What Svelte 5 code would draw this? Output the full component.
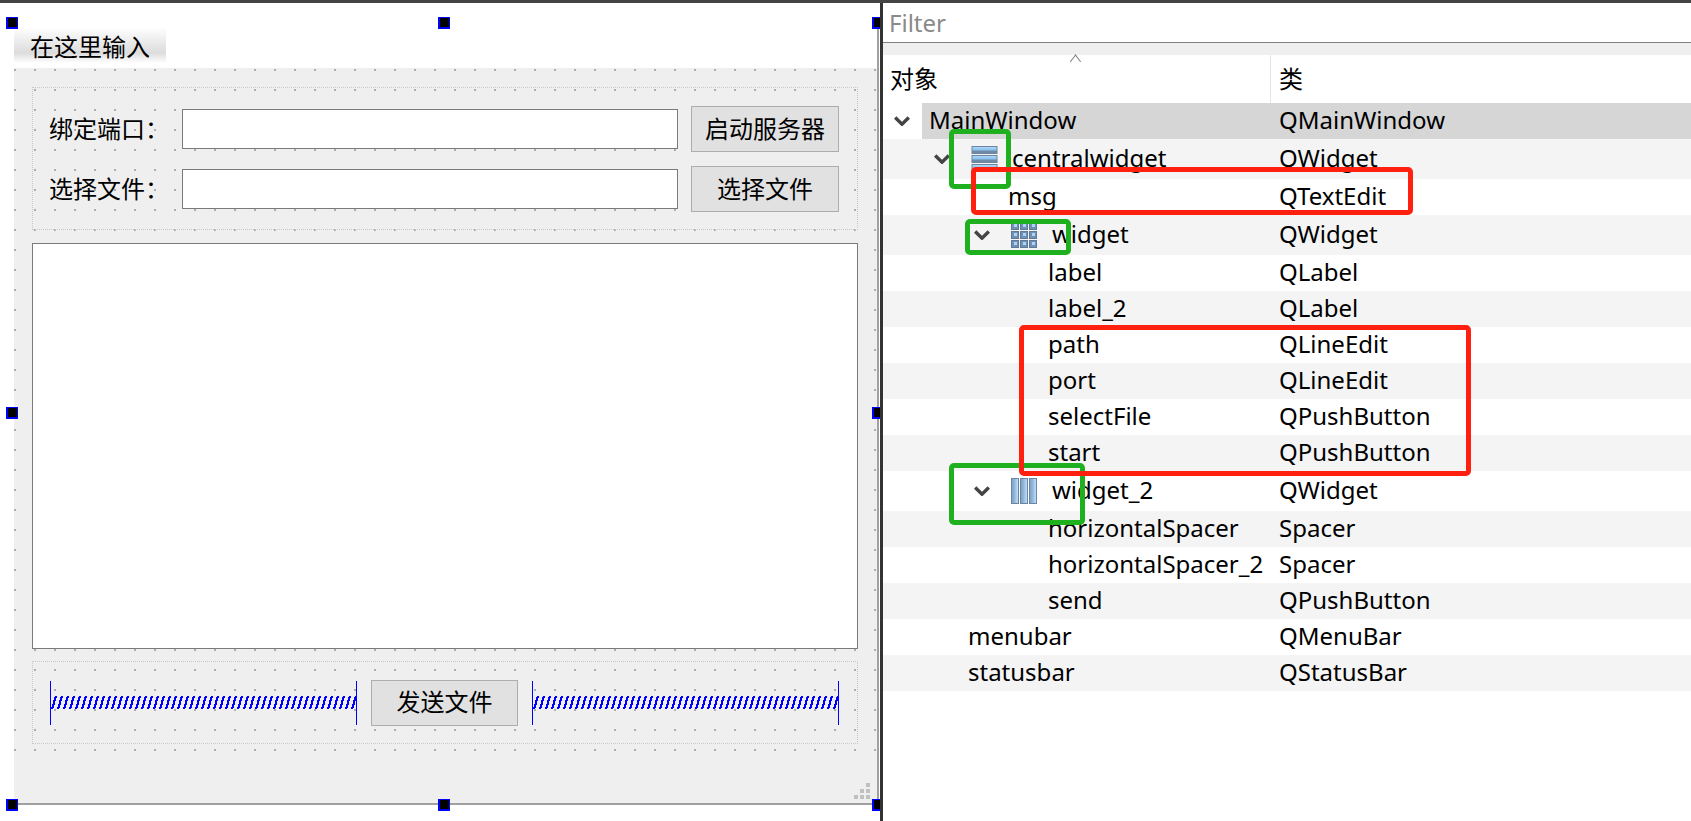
<script>
  // object inspector rows: x = left offset of chevron or text in the panel
  const rows = [
    { name: 'MainWindow', cls: 'QMainWindow', x: 11, h: 36, chev: true, root: true },
    { name: 'centralwidget', cls: 'QWidget', x: 51, h: 40, chev: true, icon: 'vbox' },
    { name: 'msg', cls: 'QTextEdit', x: 125, h: 36 },
    { name: 'widget', cls: 'QWidget', x: 91, h: 40, chev: true, icon: 'grid' },
    { name: 'label', cls: 'QLabel', x: 165, h: 36 },
    { name: 'label_2', cls: 'QLabel', x: 165, h: 36 },
    { name: 'path', cls: 'QLineEdit', x: 165, h: 36 },
    { name: 'port', cls: 'QLineEdit', x: 165, h: 36 },
    { name: 'selectFile', cls: 'QPushButton', x: 165, h: 36 },
    { name: 'start', cls: 'QPushButton', x: 165, h: 36 },
    { name: 'widget_2', cls: 'QWidget', x: 91, h: 40, chev: true, icon: 'hbox' },
    { name: 'horizontalSpacer', cls: 'Spacer', x: 165, h: 36 },
    { name: 'horizontalSpacer_2', cls: 'Spacer', x: 165, h: 36 },
    { name: 'send', cls: 'QPushButton', x: 165, h: 36 },
    { name: 'menubar', cls: 'QMenuBar', x: 85, h: 36 },
    { name: 'statusbar', cls: 'QStatusBar', x: 85, h: 36 }
  ];

  // selection handles, relative to the designer (which starts under the top bar)
  const handles = [
    [6, 14], [438, 14], [872, 14],
    [6, 404], [872, 404],
    [6, 796], [438, 796], [872, 796]
  ];

  const marks = [
    { c: 'green', x: 949, y: 129, w: 62, h: 60 },
    { c: 'green', x: 965, y: 219, w: 106, h: 36 },
    { c: 'green', x: 949, y: 463, w: 136, h: 62 },
    { c: 'red', x: 971, y: 167, w: 442, h: 48 },
    { c: 'red', x: 1019, y: 325, w: 452, h: 151 }
  ];

  const coil = Array.from({ length: 51 }, (_, i) => i * 6);
</script>

{#snippet spacer()}
  <svg class="spacer" viewBox="0 0 307 44" preserveAspectRatio="none">
    <path d="M0.5 0V44M306.5 0V44" stroke="#0000ff" fill="none" />
    {#each coil as x}
      <path d="M{x + 2} 28L{x + 6} 15" stroke="#0000ff" stroke-width="2.2" fill="none" shape-rendering="crispEdges" />
    {/each}
  </svg>
{/snippet}

<div class="app">
  <div class="topbar"></div>
  <div class="main">
    <section class="designer">
      <div class="window">
        <div class="menubar"><span class="menuitem">在这里输入</span></div>
        <div class="central">
          <div class="grid-area">
            <div class="frame top-form">
              <span class="lbl">绑定端口：</span>
              <div class="edit"></div>
              <button class="btn">启动服务器</button>
              <span class="lbl">选择文件：</span>
              <div class="edit"></div>
              <button class="btn">选择文件</button>
            </div>
            <div class="textedit"></div>
            <div class="frame bottom-form">
              {@render spacer()}
              <button class="btn">发送文件</button>
              {@render spacer()}
            </div>
          </div>
        </div>
      </div>
      <svg class="grip" width="22" height="22" viewBox="0 0 22 22">
        <g fill="#c0c0c0">
          <rect x="12" y="0" width="4" height="4" />
          <rect x="6" y="6" width="4" height="4" /><rect x="12" y="6" width="4" height="4" />
          <rect x="0" y="12" width="4" height="4" /><rect x="6" y="12" width="4" height="4" /><rect x="12" y="12" width="4" height="4" />
        </g>
      </svg>
      {#each handles as [x, y]}
        <span class="handle" style="left:{x}px;top:{y}px"></span>
      {/each}
    </section>

    <section class="inspector">
      <div class="filter">Filter</div>
      <div class="gap"></div>
      <div class="head">
        <div class="head-name">对象<span class="sort"></span></div>
        <div class="head-cls">类</div>
      </div>
      {#each rows as r, i}
        <div class="row" class:root={r.root} class:alt={i % 2 === 1} style="height:{r.h}px">
          <div class="name" style="padding-left:{r.x}px">
            {#if r.chev}
              <svg class="chev" width="16" height="10" viewBox="0 0 16 10">
                <path d="M1.2 1.5L8 8.2L14.8 1.5" stroke="#444" stroke-width="3.4" fill="none" />
              </svg>
            {/if}
            {#if r.icon === 'vbox'}
              <svg class="icon" width="28" height="27" viewBox="0 0 28 27">
                <defs><linearGradient id="v" x1="0" y1="0" x2="0" y2="1"><stop offset="0" stop-color="#b4dcfa" /><stop offset="0.55" stop-color="#86bdea" /><stop offset="0.6" stop-color="#6f89a6" /></linearGradient></defs>
                {#each [0, 9, 18] as y}
                  <rect x="1" y={y + 0.5} width="25" height="7" fill="url(#v)" stroke="#6d85a0" />
                {/each}
              </svg>
            {:else if r.icon === 'grid'}
              <svg class="icon" width="28" height="26" viewBox="0 0 28 26">
                {#each [0, 9, 18] as y}
                  {#each [0, 9, 18] as x}
                    <rect x={x + 0.5} y={y + 0.5} width="7" height="7" fill="#7090b4" stroke="#5f7a98" />
                    <rect x={x + 3} y={y + 2} width="3" height="3" fill="#a9d6f7" />
                  {/each}
                {/each}
              </svg>
            {:else if r.icon === 'hbox'}
              <svg class="icon" width="28" height="27" viewBox="0 0 28 27">
                <defs><linearGradient id="h" x1="0" y1="0" x2="1" y2="0"><stop offset="0" stop-color="#7f9cbc" /><stop offset="0.45" stop-color="#8fb9e0" /><stop offset="1" stop-color="#c6e4fb" /></linearGradient></defs>
                {#each [0, 9, 18] as x}
                  <rect x={x + 0.5} y="0.5" width="7" height="25" fill="url(#h)" stroke="#6d85a0" />
                {/each}
              </svg>
            {/if}
            <span class="text">{r.name}</span>
          </div>
          <div class="cls">{r.cls}</div>
        </div>
      {/each}
    </section>
  </div>

  {#each marks as m}
    <div class="mark {m.c}" style="left:{m.x}px;top:{m.y}px;width:{m.w}px;height:{m.h}px"></div>
  {/each}
</div>

<style>
  :global(body) {
    margin: 0;
    background: #fff;
    overflow: hidden;
  }

  .app {
    position: relative;
    width: 1691px;
    height: 821px;
    overflow: hidden;
    font-family: "Noto Sans", "Noto Sans CJK SC", sans-serif;
    font-size: 24px;
    color: #000;
  }

  .topbar {
    height: 3px;
    background: #444;
  }

  .main {
    display: flex;
    height: 818px;
  }

  /* form designer on the left */
  .designer {
    position: relative;
    width: 880px;
    flex: none;
    overflow: hidden;
    background: #fff;
    padding: 24px 1px 0 14px;
    box-sizing: border-box;
  }

  .window {
    width: 865px;
    height: 778px;
    box-sizing: border-box;
    border-right: 2px solid #a0a0a0;
    border-bottom: 2px solid #a0a0a0;
  }

  .menubar {
    height: 41px;
  }

  .menuitem {
    display: flex;
    align-items: center;
    width: 136px;
    height: 36px;
    padding-left: 16px;
    background: linear-gradient(#fff 0%, #dcdcdc 72%, #fff 100%);
  }

  .central {
    height: 735px;
    background: #efefef;
  }

  .grid-area {
    height: 684px;
    box-sizing: border-box;
    padding: 19px 19px 0 18px;
    background-image: conic-gradient(from 0deg at 2px 2px, transparent 75%, #adadad 0);
    background-size: 20px 20px;
    background-position: 0 1px;
  }

  .frame {
    box-sizing: border-box;
    border: 1px dotted #c8c8c8;
  }

  .top-form {
    height: 143px;
    display: grid;
    grid-template-columns: 119px 496px 148px;
    grid-auto-rows: 46px;
    column-gap: 13px;
    row-gap: 14px;
    padding: 18px 0 0 17px;
    align-items: center;
  }

  .lbl {
    padding-bottom: 4px;
    margin-left: -1px;
    white-space: nowrap;
  }

  .edit {
    height: 40px;
    box-sizing: border-box;
    background: #fff;
    border: 1px solid #7a7a7a;
  }

  .btn {
    height: 46px;
    width: 148px;
    padding: 0 0 4px;
    box-sizing: border-box;
    background: #e1e1e1;
    border: 1px solid #adadad;
    font: inherit;
    color: #000;
  }

  .textedit {
    height: 406px;
    margin-top: 13px;
    box-sizing: border-box;
    background: #fff;
    border: 1px solid #7a7a7a;
  }

  .bottom-form {
    height: 83px;
    margin-top: 12px;
    display: flex;
    align-items: center;
    gap: 14px;
    padding: 0 18px 0 17px;
  }

  .spacer {
    width: 307px;
    height: 44px;
    flex: none;
    display: block;
  }

  .grip {
    position: absolute;
    left: 854px;
    top: 780px;
  }

  .handle {
    position: absolute;
    width: 12px;
    height: 12px;
    box-sizing: border-box;
    background: #000;
    border: 1px solid #0000ff;
    border-width: 1px 1px 2px 2px;
  }

  /* object inspector on the right */
  .inspector {
    flex: 1;
    border-left: 3px solid #333;
    min-width: 0;
  }

  .filter {
    height: 40px;
    line-height: 40px;
    padding-left: 6px;
    color: #8a8a8a;
    box-sizing: border-box;
    border-bottom: 1px solid #808080;
  }

  .gap {
    height: 12px;
    background: #efefef;
  }

  .head {
    display: flex;
    height: 48px;
    background: #fff;
  }

  .head-name {
    position: relative;
    width: 388px;
    box-sizing: border-box;
    padding: 5px 0 0 7px;
    border-right: 1px solid #e5e5e5;
  }

  .head-cls {
    padding: 5px 0 0 8px;
  }

  .sort {
    position: absolute;
    left: 188px;
    top: 2px;
    width: 8px;
    height: 8px;
    border-left: 1px solid #777;
    border-top: 1px solid #777;
    transform: rotate(45deg) skew(8deg, 8deg);
  }

  .row {
    display: flex;
    align-items: stretch;
  }

  .row.alt {
    background: #f4f4f4;
  }

  .name {
    width: 388px;
    flex: none;
    box-sizing: border-box;
    display: flex;
    align-items: center;
    white-space: nowrap;
  }

  .text,
  .cls {
    padding-bottom: 4px;
    box-sizing: border-box;
  }

  .chev {
    flex: none;
    margin-right: 21px;
  }

  .icon {
    flex: none;
    margin-right: 13px;
  }

  .cls {
    display: flex;
    align-items: center;
    padding-left: 8px;
    flex: 1;
  }

  .root .chev {
    margin-right: 12px;
  }

  .root .text {
    flex: 1;
    align-self: stretch;
    display: flex;
    align-items: center;
    padding-left: 7px;
    background: #d6d6d6;
  }

  .root .cls {
    background: #d6d6d6;
  }

  /* hand-drawn review boxes over the screenshot */
  .mark {
    position: absolute;
    box-sizing: border-box;
    border: 5px solid;
    border-radius: 5px;
  }

  .green {
    border-color: #1fb01f;
  }

  .red {
    border-color: #ff2010;
  }
</style>
